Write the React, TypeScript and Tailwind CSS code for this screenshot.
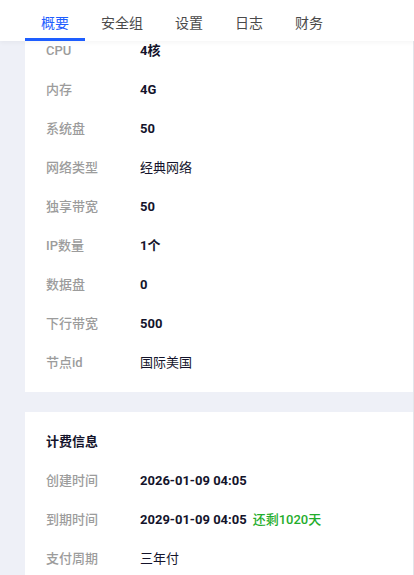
import React from 'react';

const font = { fontFamily: 'Roboto, "Noto Sans CJK SC", sans-serif' };

const tabs = ['概要', '安全组', '设置', '日志', '财务'];

const specRows: { label: string; value: string; bold?: boolean }[] = [
  { label: 'CPU', value: '4核', bold: true },
  { label: '内存', value: '4G', bold: true },
  { label: '系统盘', value: '50', bold: true },
  { label: '网络类型', value: '经典网络' },
  { label: '独享带宽', value: '50', bold: true },
  { label: 'IP数量', value: '1个', bold: true },
  { label: '数据盘', value: '0', bold: true },
  { label: '下行带宽', value: '500', bold: true },
  { label: '节点id', value: '国际美国' },
];

function Row({ label, children }: { label: string; children: React.ReactNode }) {
  return (
    <div className="flex items-center h-[39px] text-[13px]">
      <div className="w-[94px] text-[#9c9c9c] font-medium">{label}</div>
      <div className="flex items-center text-[#14142b]">{children}</div>
    </div>
  );
}

export default function App() {
  return (
    <div className="w-[414px] h-[575px] overflow-hidden bg-[#eef0f7] flex flex-col" style={font}>
      {/* 顶部标签栏 */}
      <div className="h-[41px] bg-white flex pl-[25px] shrink-0 relative z-10 shadow-[0_2px_4px_rgba(0,0,0,0.04)]">
        {tabs.map((t, i) => (
          <div
            key={t}
            className={`h-[41px] px-4 pt-[8px] flex items-center text-[14px] border-b-[3px] ${
              i === 0 ? 'text-[#1e5eff] border-[#1e5eff]' : 'text-[#4a4a4a] border-transparent'
            }`}
          >
            {t}
          </div>
        ))}
      </div>

      {/* 内容（已向下滚动） */}
      <div className="flex-1 overflow-hidden border-r border-[#e3e5ea]">
        <div className="-mt-[20px] pl-[25px] flex flex-col gap-[20px]">
          <div className="bg-white pl-[21px] pt-[10px] pb-[10px]">
            {specRows.map((r) => (
              <Row key={r.label} label={r.label}>
                <span className={r.bold ? 'font-bold' : ''}>{r.value}</span>
              </Row>
            ))}
          </div>

          <div className="bg-white pl-[21px] pt-[10px] pb-[10px]">
            <div className="h-[39px] flex items-center text-[13px] font-bold text-[#14142b]">计费信息</div>
            <Row label="创建时间">
              <span className="font-bold">2026-01-09 04:05</span>
            </Row>
            <Row label="到期时间">
              <span className="font-bold">2029-01-09 04:05</span>
              <span className="ml-[6px] text-[#1fad2c] font-medium">还剩1020天</span>
            </Row>
            <Row label="支付周期">
              <span>三年付</span>
            </Row>
          </div>
        </div>
      </div>
    </div>
  );
}
